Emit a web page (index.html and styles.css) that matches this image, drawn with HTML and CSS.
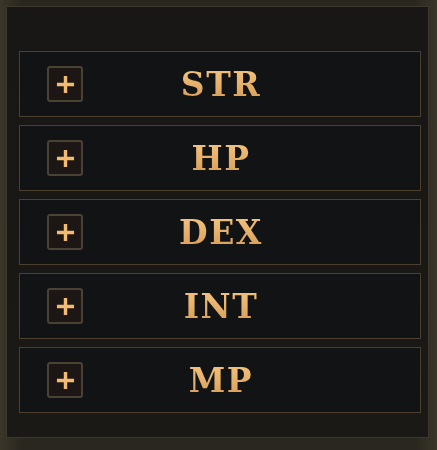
FILE: index.html
```html
<!DOCTYPE html>
<html>
<head>
<meta charset="utf-8">
<link rel="stylesheet" href="styles.css">
</head>
<body>
<div class="frame">
  <div class="panel">
    <div class="stat"><button class="plus"><svg viewBox="0 0 20 20" width="20" height="20"><path d="M10 1v18M1 10h18" stroke="#f2bb72" stroke-width="3.6"/></svg></button><span class="label">STR</span><span class="spacer"></span></div>
    <div class="stat"><button class="plus"><svg viewBox="0 0 20 20" width="20" height="20"><path d="M10 1v18M1 10h18" stroke="#f2bb72" stroke-width="3.6"/></svg></button><span class="label">HP</span><span class="spacer"></span></div>
    <div class="stat"><button class="plus"><svg viewBox="0 0 20 20" width="20" height="20"><path d="M10 1v18M1 10h18" stroke="#f2bb72" stroke-width="3.6"/></svg></button><span class="label">DEX</span><span class="spacer"></span></div>
    <div class="stat"><button class="plus"><svg viewBox="0 0 20 20" width="20" height="20"><path d="M10 1v18M1 10h18" stroke="#f2bb72" stroke-width="3.6"/></svg></button><span class="label">INT</span><span class="spacer"></span></div>
    <div class="stat"><button class="plus"><svg viewBox="0 0 20 20" width="20" height="20"><path d="M10 1v18M1 10h18" stroke="#f2bb72" stroke-width="3.6"/></svg></button><span class="label">MP</span><span class="spacer"></span></div>
  </div>
</div>
</body>
</html>
```

FILE: styles.css
```css
html, body {
  margin: 0;
  padding: 0;
  background: #2e2a22;
}
.frame {
  width: 437px;
  height: 450px;
  box-sizing: border-box;
  padding: 6px 8px 12px 6px;
  background: linear-gradient(90deg, #3a3629 0%, #2a2720 5%, #2a2720 95%, #3a3629 100%);
}
.panel {
  height: 100%;
  box-sizing: border-box;
  border: 1px solid #3d382b;
  background: linear-gradient(180deg, #191715 0%, #1b1916 100%);
  padding: 44px 7px 0 12px;
  display: flex;
  flex-direction: column;
  gap: 8px;
}
.stat {
  height: 66px;
  box-sizing: border-box;
  border: 1px solid #4b4030;
  background: #121314;
  display: grid;
  grid-template-columns: 36px 1fr 36px;
  align-items: center;
  padding: 0 27px 0 27px;
}
.plus {
  width: 36px;
  height: 36px;
  box-sizing: border-box;
  border: 2px solid #4a4235;
  border-radius: 3px;
  background: #1c1714;
  padding: 0;
  display: flex;
  align-items: center;
  justify-content: center;
}
.plus svg { display: block; width: 19px; height: 19px; }
.label {
  text-align: center;
  font-family: "DejaVu Serif", "Liberation Serif", serif;
  font-weight: bold;
  font-size: 33px;
  letter-spacing: 1.5px;
  color: #e9b066;
  background: linear-gradient(180deg, #f3c47f 0%, #d79d57 100%);
  -webkit-background-clip: text;
  background-clip: text;
  -webkit-text-fill-color: transparent;
  line-height: 1;
  padding-left: 2px;
  margin-top: 1px;
}
```
